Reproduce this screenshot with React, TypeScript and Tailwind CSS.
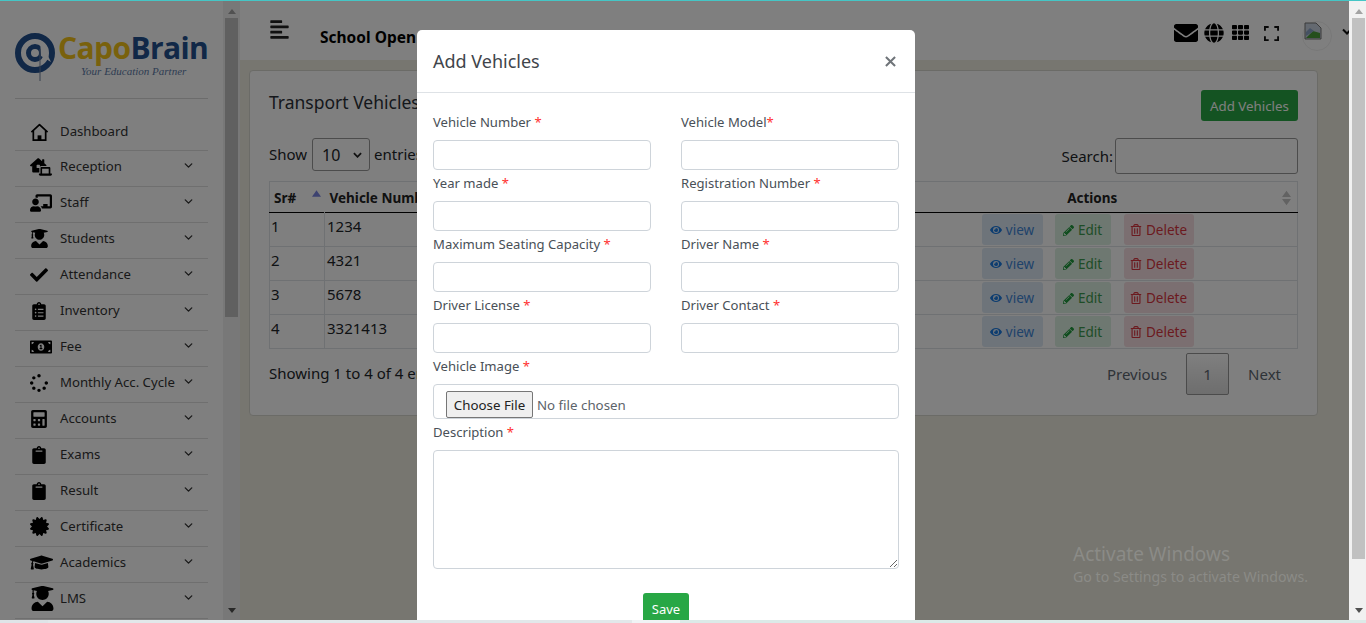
import React from "react";
import {
  FaLaptopHouse,
  FaChalkboardTeacher,
  FaUserGraduate,
  FaCheck,
  FaClipboardList,
  FaMoneyBillAlt,
  FaSpinner,
  FaCalculator,
  FaClipboard,
  FaCertificate,
  FaGraduationCap,
  FaAlignLeft,
  FaEnvelope,
  FaGlobe,
  FaTh,
  FaEye,
  FaPencilAlt,
  FaRegTrashAlt,
} from "react-icons/fa";
import { FiChevronDown } from "react-icons/fi";

const HomeOutline = () => (
  <svg viewBox="0 0 20 20" className="h-[19px] w-[19px]" fill="none" stroke="#000" strokeWidth="1.8">
    <path d="M1.5 9.5 10 1.8l8.500 7.700" strokeLinejoin="round" />
    <path d="M3.500 8v10h13V8" />
    <rect x="8" y="13" width="4" height="5" fill="#000" stroke="none" />
  </svg>
);

const menu = [
  { label: "Reception", icon: <FaLaptopHouse size={22} /> },
  { label: "Staff", icon: <FaChalkboardTeacher size={22} /> },
  { label: "Students", icon: <FaUserGraduate size={19} /> },
  { label: "Attendance", icon: <FaCheck size={18} /> },
  { label: "Inventory", icon: <FaClipboardList size={18} /> },
  { label: "Fee", icon: <FaMoneyBillAlt size={22} /> },
  { label: "Monthly Acc. Cycle", icon: <FaSpinner size={18} /> },
  { label: "Accounts", icon: <FaCalculator size={18} /> },
  { label: "Exams", icon: <FaClipboard size={18} /> },
  { label: "Result", icon: <FaClipboard size={18} /> },
  { label: "Certificate", icon: <FaCertificate size={19} /> },
  { label: "Academics", icon: <FaGraduationCap size={23} /> },
  { label: "LMS", icon: <FaUserGraduate size={25} /> },
];

const rows = [
  { sr: 1, number: "1234" },
  { sr: 2, number: "4321" },
  { sr: 3, number: "5678" },
  { sr: 4, number: "3321413" },
];

const fields = [
  { label: "Vehicle Number", star: " *" },
  { label: "Vehicle Model", star: "*" },
  { label: "Year made", star: " *" },
  { label: "Registration Number", star: " *" },
  { label: "Maximum Seating Capacity", star: " *" },
  { label: "Driver Name", star: " *" },
  { label: "Driver License", star: " *" },
  { label: "Driver Contact", star: " *" },
];

const FieldLabel = ({ text, star = " *" }: { text: string; star?: string }) => (
  <label className="mb-[8px] mt-[2px] block h-[21px] text-[13.100px] leading-[23px] text-[#495057]">
    {text}
    <span className="text-[#ff3030]">{star}</span>
  </label>
);

const Sidebar = () => (
  <div className="flex h-full w-[223px] shrink-0 flex-col bg-white px-[15px]">
    <div className="h-[98px] border-b border-[#d8d8d8]">
      <div className="flex pt-[31px]">
        <svg viewBox="0 0 40 50" className="h-[50px] w-[40px] shrink-0">
          <circle cx="20" cy="21" r="17" fill="none" stroke="#22508f" strokeWidth="6" />
          <circle cx="20" cy="21" r="6.500" fill="none" stroke="#22508f" strokeWidth="5" />
          <path d="M25 8 L36 30 L26 24Z" fill="#fff" />
          <path d="M25 17V49" stroke="#6d7f99" strokeWidth="1" />
        </svg>
        <div className="ml-[3px] font-['Open_Sans',sans-serif]">
          <div className="h-[32px] text-[30px] font-bold leading-[32px] tracking-[-0.6px] whitespace-nowrap">
            <span className="text-[#f3c318]">Capo</span>
            <span className="text-[#22508f]">Brain</span>
          </div>
          <div className="ml-[23px] font-['Liberation_Serif',serif] text-[11px] italic leading-[14px] whitespace-nowrap text-[#5d7aa6]">
            Your Education Partner
          </div>
        </div>
      </div>
    </div>
    <div className="mt-[15px] text-[13.200px] text-[#333]">
      <div className="flex h-[37px] items-center border-b border-[#dedede] pl-[15px]">
        <span className="flex w-[30px] items-center">
          <HomeOutline />
        </span>
        Dashboard
      </div>
      {menu.map((item) => (
        <div key={item.label} className="flex h-[36px] items-center border-b border-[#dedede] pb-[4px] pl-[15px]">
          <span className="flex w-[30px] items-center text-black">{item.icon}</span>
          <span className="whitespace-nowrap">{item.label}</span>
          <FiChevronDown size={13} className="absolute left-[182px] mt-[-2px] text-[#333]" strokeWidth={2.500} />
        </div>
      ))}
    </div>
  </div>
);

const SideScrollbar = () => (
  <div className="flex h-full w-[17px] shrink-0 flex-col items-center bg-[#f1f1f1]">
    <svg viewBox="0 0 10 6" className="mt-[8px] h-[5px] w-[8px]">
      <polygon points="5,0 10,6 0,6" fill="#a3a3a3" />
    </svg>
    <div className="mt-[4px] h-[299px] w-[13px] bg-[#c1c1c1]" />
    <div className="flex-1" />
    <svg viewBox="0 0 10 6" className="mb-[7px] h-[5px] w-[8px]">
      <polygon points="0,0 10,0 5,6" fill="#505050" />
    </svg>
  </div>
);

const Header = () => (
  <div className="flex h-[59px] shrink-0 items-center overflow-hidden bg-white pl-[29px] text-black">
    <FaAlignLeft size={21} className="mt-[-3px] text-[#222]" />
    <span className="ml-[30px] mt-[14px] text-[15.500px] font-bold whitespace-nowrap">School Open</span>
    <div className="ml-auto flex items-start self-start pt-[20px]">
      <FaEnvelope size={24} />
      <FaGlobe size={20} className="ml-[6px] mt-[2px]" />
      <FaTh size={17} className="ml-[8px] mt-[3px]" />
      <svg viewBox="0 0 16 16" className="ml-[15px] mt-[5px] h-[15px] w-[15px]" fill="none" stroke="#111" strokeWidth="2">
        <path d="M1 5V1h4M11 1h4v4M15 11v4h-4M5 15H1v-4" />
      </svg>
      <div className="ml-[23px] h-[30px] w-[30px] rounded-full border border-[#f0f0f0] pl-px">
        <svg viewBox="0 0 18 18" className="h-[18px] w-[18px]">
          <path d="M1 1h11l5 5v11H1z" fill="#c9d3e0" stroke="#777" strokeWidth="1" />
          <path d="M2 16l7-7 7 2v5z" fill="#4a9e3a" />
          <path d="M2 10l4-4 4 3-8 5z" fill="#8aa3c7" />
        </svg>
      </div>
      <svg viewBox="0 0 10 6" className="ml-[10px] mr-[-3px] mt-[7px] h-[7px] w-[10px] shrink-0" fill="none" stroke="#111" strokeWidth="2">
        <path d="M1 1l4 4 4-4" />
      </svg>
    </div>
  </div>
);

const SortArrows = ({ active }: { active?: boolean }) =>
  active ? (
    <svg viewBox="0 0 10 7" className="h-[7px] w-[9px]">
      <polygon points="5,0 10,7 0,7" fill="#7a84e0" />
    </svg>
  ) : (
    <svg viewBox="0 0 10 16" className="h-[16px] w-[9px]">
      <polygon points="5,0 10,7 0,7" fill="#c4c4c4" />
      <polygon points="0,9 10,9 5,16" fill="#c4c4c4" />
    </svg>
  );

const RowActions = () => (
  <div className="flex gap-[12px] pl-[6px] pt-px text-[13.500px]">
    <span className="flex h-[31px] w-[61px] items-center justify-center gap-[4px] rounded-[3px] bg-[#dde8f4] pt-px text-[#3f86d6]">
      <FaEye size={12} className="text-[#1a7ae0]" /> view
    </span>
    <span className="mr-px flex h-[31px] w-[56px] items-center justify-center gap-[4px] rounded-[3px] bg-[#dcf0e2] pt-px text-[#3c9a4f]">
      <FaPencilAlt size={11} className="text-[#1e9a3c]" /> Edit
    </span>
    <span className="flex h-[31px] w-[70px] items-center justify-center gap-[4px] rounded-[3px] bg-[#f6dfe2] pt-px text-[#d8343f]">
      <FaRegTrashAlt size={12} /> Delete
    </span>
  </div>
);

const VehiclesCard = () => (
  <div className="ml-[9px] h-[346px] w-[1069px] rounded-[4px] border border-[#d6d6ce] bg-white px-[19px] pt-[19px] text-[15px] text-[#212529]">
    <div className="flex h-[31px] items-center justify-between">
      <span className="mt-[-7px] text-[17.500px] text-[#2b3038]">Transport Vehicles</span>
      <button className="h-[31px] w-[97px] rounded-[3px] bg-[#28a745] pt-[2px] text-[13.300px] text-white">Add Vehicles</button>
    </div>
    <div className="mt-[17px] flex h-[36px] items-start justify-between">
      <div className="flex items-center">
        <span>Show</span>
        <div className="ml-[5px] mr-[4px] flex h-[33px] w-[58px] items-center justify-between rounded-[3px] border border-[#999] pl-[9px] pr-[7px] text-[16px]">
          10
          <svg viewBox="0 0 10 6" className="h-[6px] w-[9px]" fill="none" stroke="#222" strokeWidth="2">
            <path d="M1 1l4 4 4-4" />
          </svg>
        </div>
        <span>entries</span>
      </div>
      <div className="flex items-center">
        <span className="mr-[2px] mt-[1px]">Search:</span>
        <div className="h-[36px] w-[183px] rounded-[3px] border border-[#999]" />
      </div>
    </div>
    <table className="mt-[7px] w-[1029px] table-fixed border border-[#dee2e6] text-[15px]">
      <colgroup>
        <col className="w-[55px]" />
        <col className="w-[651px]" />
        <col />
      </colgroup>
      <thead>
        <tr className="h-[31px] border-b border-black text-[13.500px] font-bold text-[#222]">
          <th className="relative pl-[4px] pt-[2px] text-left">
            Sr#
            <span className="absolute left-[42px] top-[8px]">
              <SortArrows active />
            </span>
          </th>
          <th className="pl-[5px] pt-[2px] text-left">Vehicle Number</th>
          <th className="relative pt-[2px] text-center">
            <span className="mr-[88px]">Actions</span>
            <span className="absolute right-[6px] top-[8px]">
              <SortArrows />
            </span>
          </th>
        </tr>
      </thead>
      <tbody>
        {rows.map((row) => (
          <tr key={row.sr} className="h-[34px] border-b border-[#dee2e6]">
            <td className="border-r border-[#dee2e6] pl-[1px] align-top leading-[26px]">{row.sr}</td>
            <td className="pl-[2px] align-top leading-[26px]">{row.number}</td>
            <td className="align-top">
              <RowActions />
            </td>
          </tr>
        ))}
      </tbody>
    </table>
    <div className="mt-[4px] flex items-center justify-between">
      <span className="mt-[-2px]">Showing 1 to 4 of 4 entries</span>
      <div className="mr-[17px] flex items-center text-[#5d6670]">
        <span>Previous</span>
        <span className="mx-[19px] flex h-[42px] w-[43px] items-center justify-center rounded-[2px] border border-[#979797] bg-gradient-to-b from-white to-[#dcdcdc]">
          1
        </span>
        <span>Next</span>
      </div>
    </div>
  </div>
);

const AddVehicleModal = () => (
  <div className="absolute left-[417px] top-[29px] w-[498px] rounded-[5px] bg-white font-['Noto_Sans',sans-serif]">
    <div className="flex h-[63px] items-center justify-between border-b border-[#dee2e6] px-[16px] pt-px">
      <span className="text-[18px] text-[#3f454b]">Add Vehicles</span>
      <svg viewBox="0 0 12 12" className="mr-[3px] h-[11px] w-[11px]" stroke="#6f7479" strokeWidth="2.200">
        <path d="M1 1l10 10M11 1L1 11" />
      </svg>
    </div>
    <div className="px-[16px] pt-[16px]">
      <div className="grid grid-cols-2 gap-x-[30px]">
        {fields.map((f) => (
          <div key={f.label}>
            <FieldLabel text={f.label} star={f.star} />
            <input className="block h-[30px] w-[218px] rounded-[4px] border border-[#ced4da] bg-white" />
          </div>
        ))}
      </div>
      <FieldLabel text="Vehicle Image" />
      <div className="h-[35px] rounded-[4px] border border-[#ced4da] pl-[12px] pt-[6px]">
        <input
          type="file"
          className="block w-[400px] text-[13.300px] leading-[20px] text-[#5c636a] file:mr-[4px] file:h-[27px] file:w-[87px] file:rounded-[2px] file:border file:border-[#767676] file:bg-[#efefef] file:text-[13.300px] file:text-[#222]"
        />
      </div>
      <FieldLabel text="Description" />
      <textarea className="block h-[119px] w-[466px] rounded-[4px] border border-[#ced4da]" />
      <div className="mt-[24px] flex justify-center">
        <button className="h-[32px] w-[46px] rounded-[3px] bg-[#28a745] pt-[2px] text-[13px] text-white">Save</button>
      </div>
    </div>
  </div>
);

export default function App() {
  return (
    <div className="relative flex h-[623px] w-[1366px] flex-col overflow-hidden bg-white font-['Noto_Sans',sans-serif]">
      <div className="h-px shrink-0 bg-[#45c6c6]" />
      <div className="flex min-h-0 flex-1">
        <div className="relative flex min-w-0 flex-1">
          <div className="relative flex">
            <Sidebar />
          </div>
          <SideScrollbar />
          <div className="flex min-w-0 flex-1 flex-col bg-[#eeece1]">
            <Header />
            <div className="pt-[10px]">
              <VehiclesCard />
            </div>
          </div>
          <div className="absolute inset-0 bg-black/50" />
          <div className="absolute left-[1073px] top-[541px] text-[#8b8b87]">
            <div className="text-[19px] leading-[24px]">Activate Windows</div>
            <div className="mt-px text-[14.200px] leading-[20px]">Go to Settings to activate Windows.</div>
          </div>
          <AddVehicleModal />
        </div>
        <div className="flex w-[17px] shrink-0 flex-col items-center bg-[#f1f1f1] pl-[2px]">
          <svg viewBox="0 0 10 6" className="mt-[8px] h-[5px] w-[8px]">
            <polygon points="5,0 10,6 0,6" fill="#a3a3a3" />
          </svg>
          <div className="mt-[4px] h-[541px] w-[13px] bg-[#c1c1c1]" />
          <div className="flex-1" />
          <svg viewBox="0 0 10 6" className="mb-[7px] h-[5px] w-[8px]">
            <polygon points="0,0 10,0 5,6" fill="#505050" />
          </svg>
        </div>
      </div>
      <div className="relative z-10 flex h-[3px] shrink-0">
        <div className="w-[48px] bg-[#dfe4e8]" />
        <div className="w-[584px] bg-[#e2e8ea]" />
        <div className="w-[48px] bg-[#f0f3f5]" />
        <div className="flex-1 bg-[#dceae8]" />
      </div>
    </div>
  );
}
